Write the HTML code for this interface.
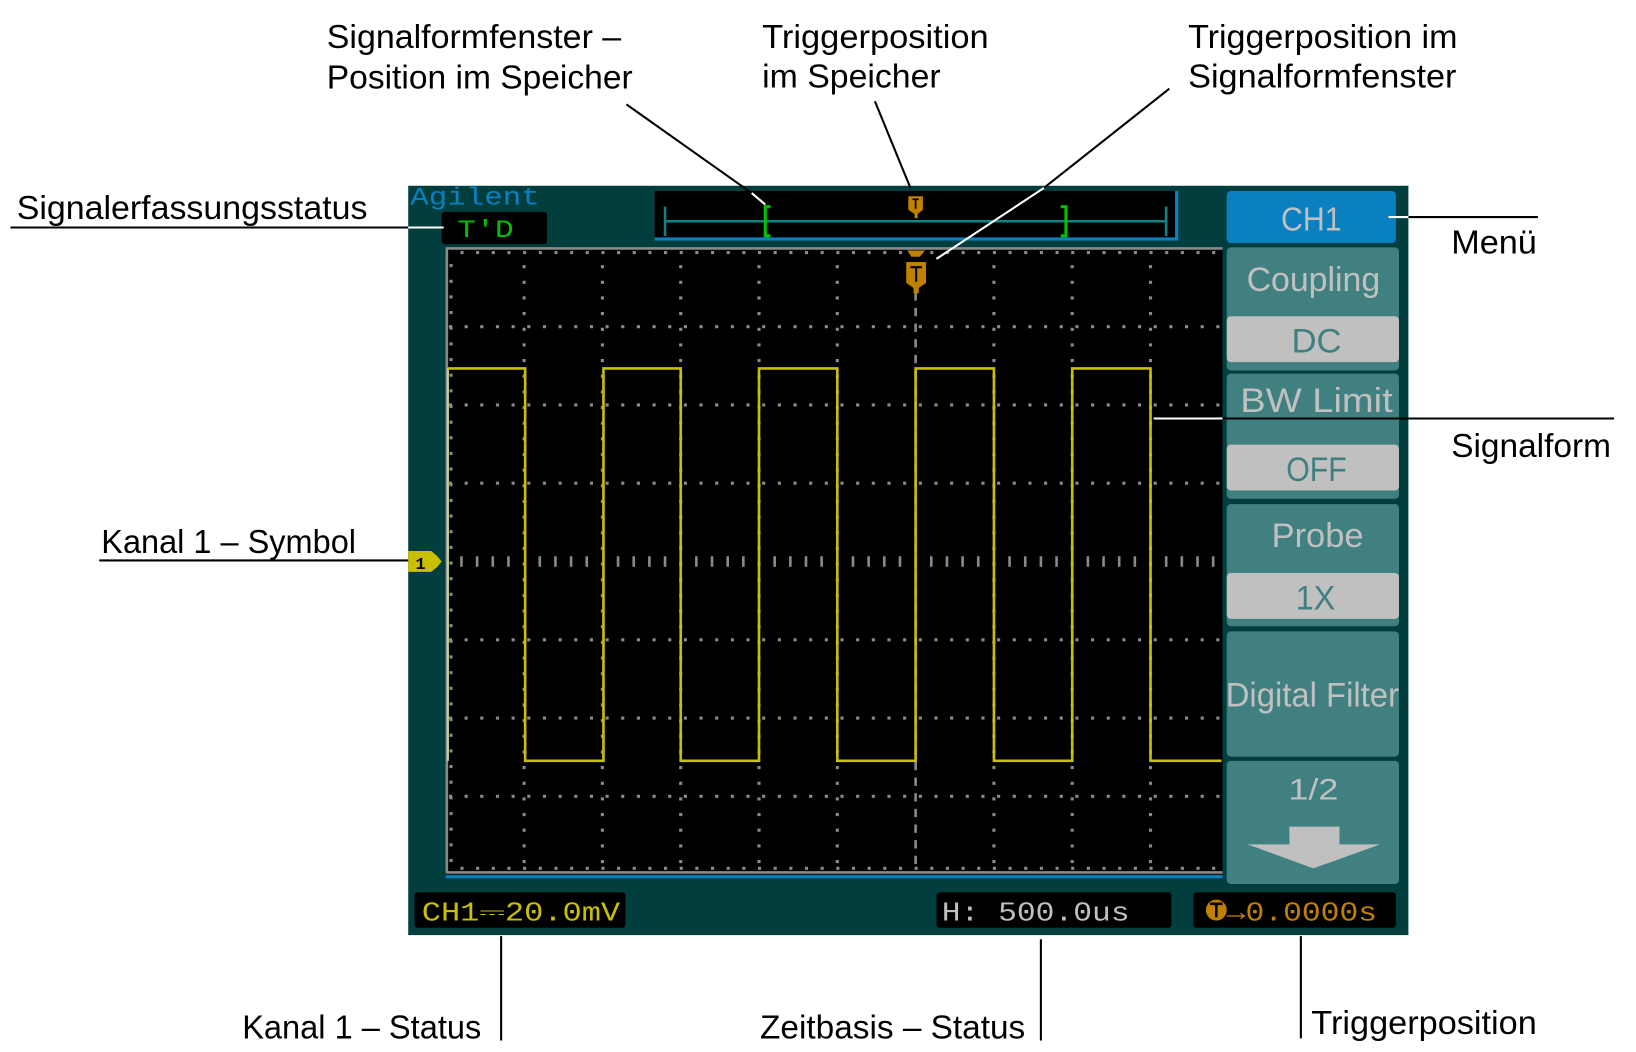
<!DOCTYPE html>
<html><head><meta charset="utf-8"><style>
html,body{margin:0;padding:0;background:#fff;width:1636px;height:1052px;overflow:hidden}
svg{display:block}
.lab{font-family:"Liberation Sans Narrow","Liberation Sans",sans-serif;font-size:32px;fill:#000}
.mono{font-family:"Liberation Mono",monospace}
.mt{font-family:"Liberation Sans Narrow","Liberation Sans",sans-serif}
</style></head><body>
<svg width="1636" height="1052" viewBox="0 0 1567 1008" preserveAspectRatio="none" xmlns="http://www.w3.org/2000/svg">
<rect width="1567" height="1008" fill="#fff"/>
<rect x="391" y="178" width="958" height="718" fill="#033e3f"/>
<text x="393" y="196" class="mono" font-size="24" fill="#0a80c0" textLength="124" lengthAdjust="spacingAndGlyphs">Agilent</text>
<rect x="423" y="203" width="101" height="31" rx="3" fill="#000"/>
<text x="438" y="227" class="mono" font-size="24" fill="#00c000" textLength="54" lengthAdjust="spacingAndGlyphs">T'D</text>
<rect x="627" y="183" width="500" height="47" fill="#000"/>
<path d="M627 229H1127V183" stroke="#0a80c0" stroke-width="3" fill="none"/>
<path d="M637 212H1117M637 198V226M1117 198V226" stroke="#138383" stroke-width="2.5" fill="none"/>
<path d="M738 198H733V226H738M1016 198H1021V226H1016" stroke="#00c000" stroke-width="3" fill="none"/>
<path d="M870 188H884V201L879 205V209H876V205L870 201Z" fill="#c08000"/>
<path d="M874 191H880M877 191V200" stroke="#000" stroke-width="1.6"/>
<rect x="427" y="238" width="744" height="600" fill="#000"/>
<g stroke="#8a8a8a" stroke-width="2.5" fill="none">
<path d="M427 238H1171M428 238V836M427 836H1171"/>
</g>
<g stroke="#8a8a8a" stroke-width="3" fill="none" stroke-dasharray="3 12">
<path d="M430 313H1171M430 388H1171M430 463H1171M430 613H1171M430 688H1171M430 763H1171"/>
<path d="M502 254V836M577 254V836M652 254V836M727 254V836M802 254V836M952 254V836M1027 254V836M1102 254V836"/>
<path d="M441 242H1171M441 832H1171"/>
<path d="M432 253V836"/>
</g>
<g stroke="#8a8a8a" stroke-width="2.5"><path d="M442 533V543M457 533V543M472 533V543M487 533V543M517 533V543M532 533V543M547 533V543M562 533V543M592 533V543M607 533V543M622 533V543M637 533V543M667 533V543M682 533V543M697 533V543M712 533V543M742 533V543M757 533V543M772 533V543M787 533V543M817 533V543M832 533V543M847 533V543M862 533V543M892 533V543M907 533V543M922 533V543M937 533V543M967 533V543M982 533V543M997 533V543M1012 533V543M1042 533V543M1057 533V543M1072 533V543M1087 533V543M1117 533V543M1132 533V543M1147 533V543M1162 533V543"/></g>
<path d="M877 280V836" stroke="#8a8a8a" stroke-width="2.5" stroke-dasharray="8 7"/>
<path d="M429 353V729" stroke="#cfcf90" stroke-width="2"/>
<path d="M429 353H503V729H578V353H652V729H727V353H802V729H877V353H952V729H1027V353H1102V729H1170" stroke="#c8c000" stroke-width="2.5" fill="none"/>
<path d="M427 840H1171" stroke="#0a80c0" stroke-width="3"/>
<path d="M869 240H886L881 246H873Z" fill="#c08000"/>
<path d="M868 251H887V271L880 276V281H875V276L868 271Z" fill="#c08000"/>
<path d="M872 256H883M877.5 256V270" stroke="#000" stroke-width="2"/>
<path d="M391 528H413L419 533L423 538L419 543L413 548H391Z" fill="#c8c000"/>
<text x="398" y="545" class="mono" font-size="16" font-weight="bold" fill="#000">1</text>
<rect x="1175" y="183" width="162" height="50" rx="4" fill="#0a80c0"/>
<text x="1256" y="221" class="mt" font-size="32" fill="#c0c0c0" text-anchor="middle" textLength="58" lengthAdjust="spacingAndGlyphs">CH1</text>
<rect x="1175" y="237" width="165" height="118" rx="4" fill="#418080"/>
<rect x="1175" y="303" width="165" height="44" rx="4" fill="#c0c0c0"/>
<rect x="1175" y="358" width="165" height="120" rx="4" fill="#418080"/>
<rect x="1175" y="426" width="165" height="44" rx="4" fill="#c0c0c0"/>
<rect x="1175" y="483" width="165" height="117" rx="4" fill="#418080"/>
<rect x="1175" y="549" width="165" height="44" rx="4" fill="#c0c0c0"/>
<rect x="1175" y="605" width="165" height="120" rx="4" fill="#418080"/>
<rect x="1175" y="729" width="165" height="118" rx="4" fill="#418080"/>
<g class="mt" font-size="33" text-anchor="middle">
<text x="1258" y="279" fill="#c0c0c0" textLength="128" lengthAdjust="spacingAndGlyphs">Coupling</text>
<text x="1261" y="338" fill="#418080" textLength="48" lengthAdjust="spacingAndGlyphs">DC</text>
<text x="1261" y="395" fill="#c0c0c0" textLength="146" lengthAdjust="spacingAndGlyphs">BW Limit</text>
<text x="1261" y="461" fill="#418080" textLength="58" lengthAdjust="spacingAndGlyphs">OFF</text>
<text x="1262" y="524" fill="#c0c0c0" textLength="88" lengthAdjust="spacingAndGlyphs">Probe</text>
<text x="1260" y="584" fill="#418080" textLength="38" lengthAdjust="spacingAndGlyphs">1X</text>
<text x="1257" y="677" fill="#c0c0c0" textLength="166" lengthAdjust="spacingAndGlyphs">Digital Filter</text>
<text x="1258" y="766" fill="#c0c0c0" font-size="28" textLength="48" lengthAdjust="spacingAndGlyphs">1/2</text>
</g>
<path d="M1235 792H1283V809H1322L1258 832L1195 809H1235Z" fill="#c0c0c0"/>
<rect x="397" y="855" width="202" height="34" rx="3" fill="#000"/>
<text x="404" y="882" class="mono" font-size="26" fill="#c8c000" textLength="190" lengthAdjust="spacingAndGlyphs">CH1⎓20.0mV</text>
<rect x="897" y="855" width="225" height="34" rx="3" fill="#000"/>
<text x="902" y="882" class="mono" font-size="26" fill="#c0c0c0" textLength="180" lengthAdjust="spacingAndGlyphs">H: 500.0us</text>
<rect x="1143" y="855" width="194" height="34" rx="3" fill="#000"/>
<circle cx="1165" cy="872" r="10" fill="#c08000"/>
<path d="M1159 866H1171M1165 866V879" stroke="#000" stroke-width="2.5"/>
<text x="1175" y="882" class="mono" font-size="26" fill="#c08000" textLength="144" lengthAdjust="spacingAndGlyphs">→0.0000s</text>
<g stroke="#000" stroke-width="2" fill="none">
<path d="M10 218H391"/>
<path d="M95 537H391"/>
<path d="M600 100L720 185"/>
<path d="M838 97L872 180"/>
<path d="M1120 85L1000 180"/>
<path d="M1349 208H1473"/>
<path d="M1171 401H1546"/>
<path d="M480 897V997M997 900V997M1246 897V995"/>
</g>
<g stroke="#fff" stroke-width="2" fill="none">
<path d="M391 218H425"/>
<path d="M720 185L733 196"/>
<path d="M1000 180L897 248"/>
<path d="M1330 208H1349"/>
<path d="M1105 401H1171"/>
</g>
<text class="lab" x="16" y="210" textLength="336" lengthAdjust="spacingAndGlyphs">Signalerfassungsstatus</text>
<text class="lab" x="313" y="46" textLength="282" lengthAdjust="spacingAndGlyphs">Signalformfenster –</text>
<text class="lab" x="313" y="85" textLength="293" lengthAdjust="spacingAndGlyphs">Position im Speicher</text>
<text class="lab" x="730" y="46" textLength="217" lengthAdjust="spacingAndGlyphs">Triggerposition</text>
<text class="lab" x="730" y="84" textLength="171" lengthAdjust="spacingAndGlyphs">im Speicher</text>
<text class="lab" x="1138" y="46" textLength="258" lengthAdjust="spacingAndGlyphs">Triggerposition im</text>
<text class="lab" x="1138" y="84" textLength="257" lengthAdjust="spacingAndGlyphs">Signalformfenster</text>
<text class="lab" x="1390" y="243" textLength="82" lengthAdjust="spacingAndGlyphs">Menü</text>
<text class="lab" x="1390" y="438" textLength="153" lengthAdjust="spacingAndGlyphs">Signalform</text>
<text class="lab" x="97" y="530" textLength="244" lengthAdjust="spacingAndGlyphs">Kanal 1 – Symbol</text>
<text class="lab" x="232" y="995" textLength="229" lengthAdjust="spacingAndGlyphs">Kanal 1 – Status</text>
<text class="lab" x="728" y="995" textLength="254" lengthAdjust="spacingAndGlyphs">Zeitbasis – Status</text>
<text class="lab" x="1256" y="991" textLength="216" lengthAdjust="spacingAndGlyphs">Triggerposition</text>
</svg>
</body></html>
